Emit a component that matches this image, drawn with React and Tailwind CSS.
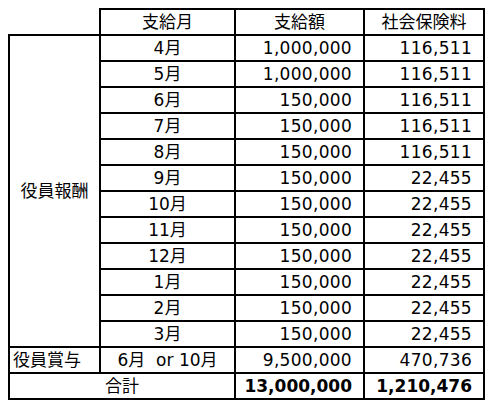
const months = [
  { m: '4月', pay: '1,000,000', ins: '116,511' },
  { m: '5月', pay: '1,000,000', ins: '116,511' },
  { m: '6月', pay: '150,000', ins: '116,511' },
  { m: '7月', pay: '150,000', ins: '116,511' },
  { m: '8月', pay: '150,000', ins: '116,511' },
  { m: '9月', pay: '150,000', ins: '22,455' },
  { m: '10月', pay: '150,000', ins: '22,455' },
  { m: '11月', pay: '150,000', ins: '22,455' },
  { m: '12月', pay: '150,000', ins: '22,455' },
  { m: '1月', pay: '150,000', ins: '22,455' },
  { m: '2月', pay: '150,000', ins: '22,455' },
  { m: '3月', pay: '150,000', ins: '22,455' },
]

const cell = 'border-2 border-black h-[26px] p-0 leading-none'
const num = cell + ' text-right pr-[11px] tracking-[0.3px]'

export default function App() {
  return (
    <div className="w-[487px] h-[403px] bg-white pt-[8px] pl-[8px] text-black text-[17px] font-['DejaVu_Sans','Noto_Sans_CJK_JP',sans-serif]">
      <table className="border-collapse table-fixed">
        <colgroup>
          <col className="w-[91px]" />
          <col className="w-[135px]" />
          <col className="w-[129px]" />
          <col className="w-[120px]" />
        </colgroup>
        <tbody>
          <tr>
            <td className="h-[26px] p-0" />
            <td className={cell + ' text-center'}>支給月</td>
            <td className={cell + ' text-center'}>支給額</td>
            <td className={cell + ' text-center'}>社会保険料</td>
          </tr>
          {months.map((r, i) => (
            <tr key={r.m}>
              {i === 0 && (
                <td rowSpan={12} className={cell + ' text-center align-middle'}>
                  役員報酬
                </td>
              )}
              <td className={cell + ' text-center'}>{r.m}</td>
              <td className={num}>{r.pay}</td>
              <td className={num}>{r.ins}</td>
            </tr>
          ))}
          <tr>
            <td className={cell + ' text-left pl-[3px]'}>役員賞与</td>
            <td className={cell + ' text-center whitespace-pre'}>6月  or 10月</td>
            <td className={num}>9,500,000</td>
            <td className={num}>470,736</td>
          </tr>
          <tr>
            <td colSpan={2} className={cell + ' text-center'}>合計</td>
            <td className={cell + ' text-right pr-[11px] font-bold'}>13,000,000</td>
            <td className={cell + ' text-right pr-[11px] font-bold'}>1,210,476</td>
          </tr>
        </tbody>
      </table>
    </div>
  )
}
